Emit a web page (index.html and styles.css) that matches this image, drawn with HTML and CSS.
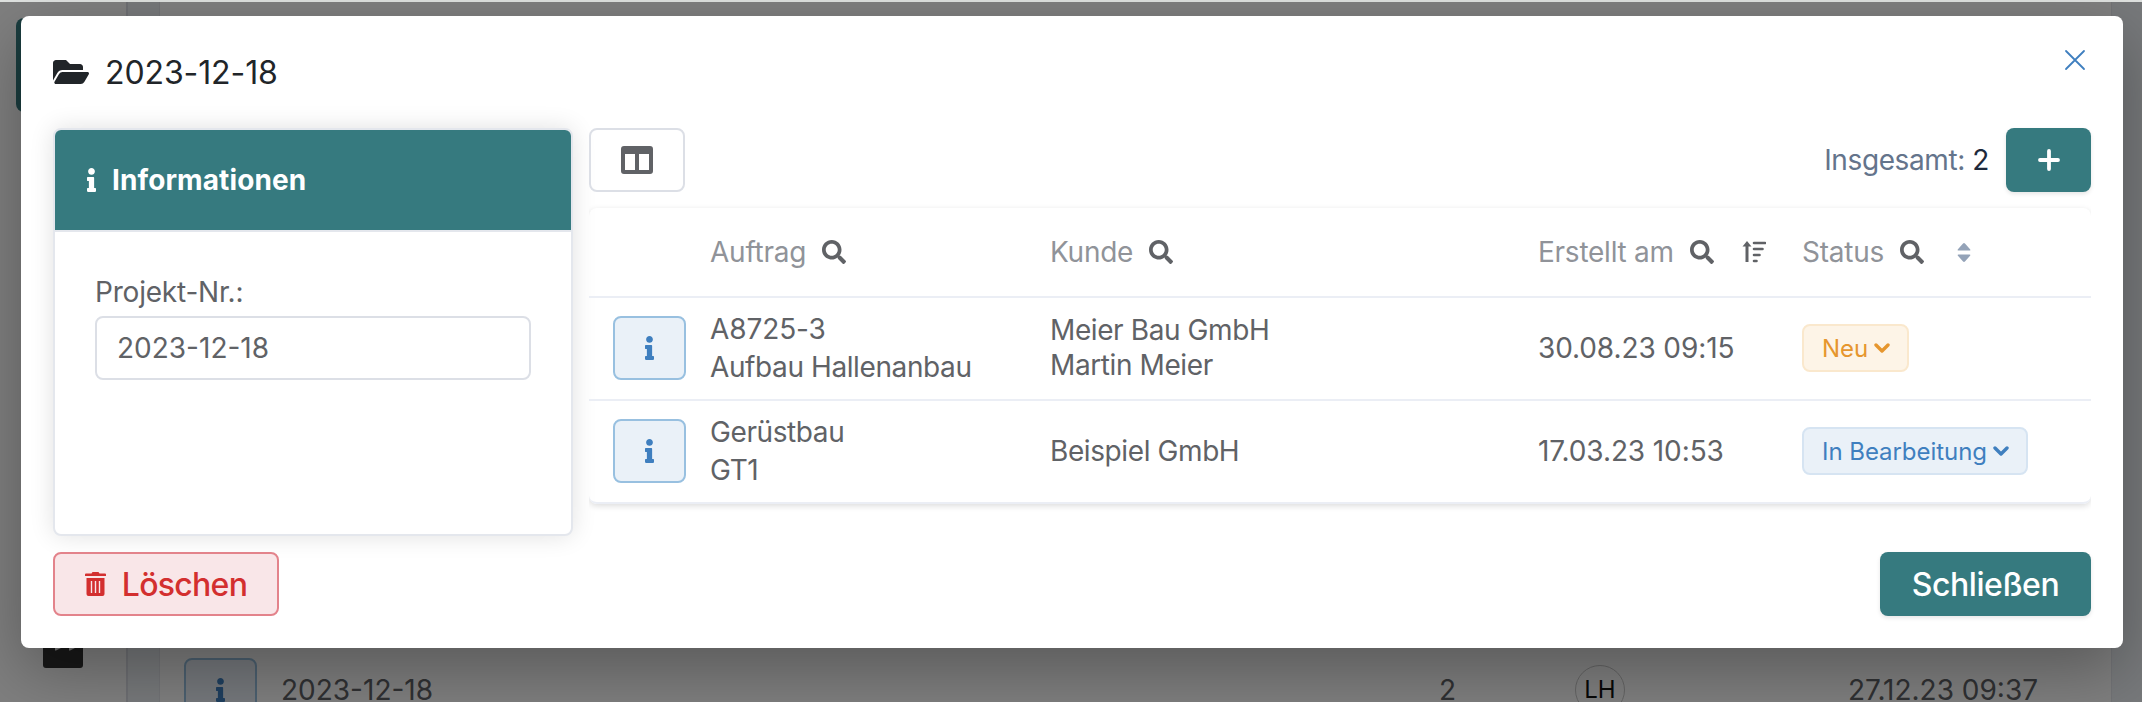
FILE: index.html
```
<!DOCTYPE html>
<html lang="de">
<head>
<meta charset="utf-8">
<title>Projekt 2023-12-18</title>
<link rel="stylesheet" href="styles.css">
</head>
<body>
<svg class="defs" width="0" height="0">
  <symbol id="info" viewBox="0 0 192 512"><path d="M20 424.229h20V279.771H20c-11.046 0-20-8.954-20-20V212c0-11.046 8.954-20 20-20h112c11.046 0 20 8.954 20 20v212.229h20c11.046 0 20 8.954 20 20V492c0 11.046-8.954 20-20 20H20c-11.046 0-20-8.954-20-20v-47.771c0-11.046 8.954-20 20-20zM96 0C56.235 0 24 32.235 24 72s32.235 72 72 72 72-32.235 72-72S135.764 0 96 0z"/></symbol>
  <symbol id="search" viewBox="0 0 512 512"><path d="M505 442.7L405.3 343c-4.500-4.500-10.600-7-17-7H372c27.600-35.300 44-79.700 44-128C416 93.100 322.900 0 208 0S0 93.100 0 208s93.100 208 208 208c48.300 0 92.700-16.400 128-44v16.300c0 6.400 2.500 12.500 7 17l99.700 99.700c9.400 9.400 24.600 9.400 33.900 0l28.300-28.300c9.400-9.400 9.400-24.600.1-34zM208 336c-70.700 0-128-57.200-128-128 0-70.700 57.200-128 128-128 70.700 0 128 57.200 128 128 0 70.700-57.200 128-128 128z"/></symbol>
  <symbol id="chevron" viewBox="0 0 16 12"><path d="M2 3l6 6 6-6" fill="none" stroke="currentColor" stroke-width="3.400" stroke-linecap="round" stroke-linejoin="round"/></symbol>
</svg>

<div class="app">
  <aside class="sidebar">
    <div class="nav-active"></div>
    <div class="nav-toggle"><svg viewBox="0 0 40 20"><path d="M12 0h6l-5 2.500h-1zM26 0h6l-5 2.500h-1z" fill="#e5e5e5"/></svg></div>
  </aside>
  <main class="content">
    <div class="panel">
      <div class="panel-row">
        <span class="btn-info"><svg class="i-info"><use href="#info"/></svg></span>
        <span class="p-name">2023-12-18</span>
        <span class="p-count">2</span>
        <span class="avatar">LH</span>
        <span class="p-date">27.12.23 09:37</span>
      </div>
    </div>
  </main>
</div>
<div class="backdrop"></div>

<div class="modal" role="dialog">
  <header class="modal-head">
    <svg class="i-folder" viewBox="0 64 576 384"><path d="M572.694 292.093L500.270 416.248A63.997 63.997 0 0 1 444.989 448H45.025c-18.523 0-30.064-20.093-20.731-36.093l72.424-124.155A64 64 0 0 1 152 256h399.964c18.523 0 30.064 20.093 20.730 36.093zM152 224h328v-48c0-26.510-21.490-48-48-48H272l-64-64H48C21.490 64 0 85.490 0 112v278.046l69.077-118.418C86.214 242.250 117.989 224 152 224z"/></svg>
    <h1>2023-12-18</h1>
    <button class="close" aria-label="Schließen"><svg viewBox="0 0 22 22"><path d="M2 2l18 18M20 2L2 20" stroke="currentColor" stroke-width="1.800" stroke-linecap="round"/></svg></button>
  </header>
  <div class="modal-body">
    <section class="card">
      <h2><svg class="i-info"><use href="#info"/></svg>Informationen</h2>
      <div class="card-body">
        <label>Projekt-Nr.:</label>
        <div class="input">2023-12-18</div>
      </div>
    </section>
    <section class="orders">
      <div class="toolbar">
        <button class="btn-cols" aria-label="Spalten"><svg viewBox="0 0 32 28"><path fill-rule="evenodd" d="M3 0h26a3 3 0 0 1 3 3v22a3 3 0 0 1-3 3H3a3 3 0 0 1-3-3V3a3 3 0 0 1 3-3zM4 8v16h10V8zM18 8v16h10V8z"/></svg></button>
        <div class="total">Insgesamt: <b>2</b></div>
        <button class="btn-add" aria-label="Neu"><svg viewBox="0 0 22 22"><path d="M11 2v18M2 11h18" stroke="currentColor" stroke-width="3.800" stroke-linecap="round"/></svg></button>
      </div>
      <div class="table">
        <div class="tr th">
          <div></div>
          <div>Auftrag<svg class="i-search"><use href="#search"/></svg></div>
          <div>Kunde<svg class="i-search"><use href="#search"/></svg></div>
          <div>Erstellt am<svg class="i-search"><use href="#search"/></svg><svg class="i-sort" viewBox="0 0 24 22"><path d="M5 4v17" fill="none" stroke="currentColor" stroke-width="3"/><path d="M5 0l4.500 5.500h-9z"/><path d="M12 2h11M12 8h8.500M12 14h5.500M12 20h2.500" fill="none" stroke="currentColor" stroke-width="2.600" stroke-linecap="round"/></svg></div>
          <div>Status<svg class="i-search"><use href="#search"/></svg><svg class="i-updown" viewBox="0 0 14 20"><path d="M7 0q.6 0 1 .5l5.400 6q.9 1.300-.6 1.500H1.200q-1.500-.2-.6-1.500L6 .5Q6.400 0 7 0zM7 20q.6 0 1-.5l5.400-6q.9-1.300-.6-1.500H1.200q-1.500.2-.6 1.500l5.400 6q.4.5 1 .5z"/></svg></div>
        </div>
        <div class="tr">
          <div><span class="btn-info"><svg class="i-info"><use href="#info"/></svg></span></div>
          <div class="stack"><span class="num">A8725-3</span><br>Aufbau Hallenanbau</div>
          <div class="tight">Meier Bau GmbH<br>Martin Meier</div>
          <div class="num">30.08.23 09:15</div>
          <div><span class="tag tag-new">Neu<svg class="i-chev"><use href="#chevron"/></svg></span></div>
        </div>
        <div class="tr">
          <div><span class="btn-info"><svg class="i-info"><use href="#info"/></svg></span></div>
          <div class="stack">Gerüstbau<br>GT1</div>
          <div>Beispiel GmbH</div>
          <div class="num">17.03.23 10:53</div>
          <div><span class="tag tag-work">In Bearbeitung<svg class="i-chev"><use href="#chevron"/></svg></span></div>
        </div>
      </div>
    </section>
  </div>
  <footer class="modal-foot">
    <button class="btn-delete"><svg viewBox="0 0 21 24"><path fill-rule="evenodd" d="M1 1.500h5.500L7.500 0h6l1 1.500H20a1 1 0 0 1 1 1V4H0V2.500a1 1 0 0 1 1-1zM1.500 6h18v16a2 2 0 0 1-2 2h-14a2 2 0 0 1-2-2zM5.800 9v12h1.400V9zM9.800 9v12h1.400V9zM13.800 9v12h1.400V9z"/></svg>Löschen</button>
    <button class="btn-close">Schließen</button>
  </footer>
</div>
</body>
</html>
```
FILE: styles.css
```
* { box-sizing: border-box; }
body {
  margin: 0;
  width: 2142px;
  height: 702px;
  overflow: hidden;
  position: relative;
  font-family: Inter, "Liberation Sans", sans-serif;
  font-size: 28px;
  color: #606266;
  background: #dfe2e0;
}
.defs { position: absolute; }
svg { display: block; flex: none; fill: currentColor; }
button { font: inherit; padding: 0; border: 0; background: none; }
h1, h2 { margin: 0; }

.app { display: flex; height: 700px; margin-top: 2px; }
.sidebar {
  width: 128px;
  background: #fff;
  border-right: 2px solid #dcdfe6;
  padding: 16px 0 0 16px;
  display: flex;
  flex-direction: column;
}
.nav-active { width: 96px; height: 94px; border-radius: 8px; background: #367a7f; }
.nav-toggle { margin: 516px 0 0 27px; width: 40px; height: 40px; padding-top: 20px; border-radius: 3px; background: #303030; }
.content { flex: 1; background: #eef2f7; padding: 0 30px 0 31px; }
.panel { background: #fff; height: 700px; padding-top: 656px; border-left: 1px solid #e4e7ed; border-right: 1px solid #e4e7ed; }
.panel-row { display: grid; grid-template-columns: 97px 1158px 136px 273px auto; align-items: center; height: 64px; padding-left: 24px; line-height: 22px; }
.avatar { width: 50px; height: 50px; border: 1px solid #c8c8c8; border-radius: 50%; color: #111; font-size: 24px; line-height: 18px; display: flex; align-items: center; justify-content: center; }
.backdrop { position: absolute; inset: 2px 0 0; background: rgba(0, 0, 0, .5); }

.modal {
  position: absolute;
  left: 21px;
  top: 16px;
  width: 2102px;
  height: 632px;
  padding: 0 32px;
  border-radius: 8px;
  background: #fff;
  box-shadow: 0 22px 64px rgba(0, 0, 0, .3);
}
.modal-head { display: flex; align-items: center; height: 112px; color: #212529; }
.i-folder { width: 36px; height: 24px; }
h1 { margin-left: 16px; font-size: 32px; font-weight: 400; letter-spacing: -.1px; }
.close { margin: -25px 5px 0 auto; color: #3f7fbf; }
.close svg { width: 22px; height: 22px; }

.modal-body { display: flex; gap: 16px; height: 408px; }
.card {
  width: 520px;
  border: 2px solid #e4e7ed;
  border-radius: 8px;
  background: #fff;
  box-shadow: 0 0 24px rgba(0, 0, 0, .12);
}
h2 {
  display: flex;
  align-items: center;
  gap: 16px;
  height: 102px;
  padding-left: 32px;
  border-bottom: 2px solid #e4e7ed;
  border-radius: 6px 6px 0 0;
  background: #367a7f;
  background-clip: padding-box;
  color: #fff;
  font-size: 28px;
  font-weight: 700;
  letter-spacing: .1px;
}
.i-info { width: 9px; height: 24px; }
.card-body { padding: 40px; }
label { display: block; height: 44px; line-height: 41px; letter-spacing: -.2px; }
.input { height: 64px; padding: 0 20px; line-height: 60px; border: 2px solid #dcdfe6; border-radius: 8px; }

.orders { width: 1502px; }
.toolbar { display: flex; align-items: center; height: 64px; }
.btn-cols { display: flex; align-items: center; justify-content: center; width: 96px; height: 64px; border: 2px solid #dcdfe6; border-radius: 8px; color: #606266; }
.btn-cols svg { width: 32px; height: 28px; }
.total { margin-left: auto; color: #64748b; letter-spacing: -.4px; }
.total b { font-weight: 400; color: #1e293b; }
.btn-add { display: flex; align-items: center; justify-content: center; width: 85px; height: 64px; margin-left: 17px; border-radius: 8px; background: #367a7f; color: #fff; box-shadow: 0 2px 4px rgba(0, 0, 0, .1); }
.btn-add svg { width: 22px; height: 22px; }

.table { margin-top: 16px; border-radius: 8px; box-shadow: 0 2px 6px rgba(0, 0, 0, .14); clip-path: inset(-4px 0 -12px 0); }
.tr { display: grid; grid-template-columns: 97px 340px 488px 264px auto; align-items: center; height: 103px; padding: 0 0 1px 24px; border-bottom: 2px solid #ebeef5; letter-spacing: -.4px; }
.tr > div { white-space: nowrap; }
.tr:last-child { border-radius: 0 0 8px 8px; }
.th { height: 90px; padding-bottom: 0; color: #909399; letter-spacing: -.25px; }
.th > div { display: flex; align-items: center; }
.tr .num { letter-spacing: -.1px; }
.i-search { width: 24px; height: 24px; margin-left: 16px; color: #606266; }
.i-sort { width: 24px; height: 22px; margin-left: 28px; color: #606266; }
.i-updown { width: 14px; height: 19px; margin-left: 33px; color: #94a3b8; }
.stack { line-height: 38px; }
.tight { line-height: 35px; }
.btn-info { display: flex; align-items: center; justify-content: center; width: 73px; height: 64px; border: 2px solid #98c0e0; border-radius: 8px; background: #eaf1f8; color: #3f7fbf; }

.tag { display: flex; align-items: center; width: max-content; height: 48px; padding: 0 17px 0 18px; border: 2px solid; border-radius: 8px; font-size: 24px; letter-spacing: -.05px; }
.tag-new { color: #e6962e; background: #fdf4e7; border-color: #fae8cd; }
.tag-work { color: #3f7fbf; background: #eaf1f8; border-color: #d6e4f2; }
.i-chev { width: 16px; height: 12px; margin-left: 6px; }

.modal-foot { display: flex; justify-content: space-between; margin-top: 16px; }
.modal-foot button { display: flex; align-items: center; justify-content: center; height: 64px; border-radius: 8px; font-size: 32px; font-weight: 500; }
.btn-delete { width: 226px; gap: 16px; border: 2px solid #e3838b; background: #f9e6e8; color: #d32f2f; letter-spacing: -.7px; }
.btn-delete svg { width: 21px; height: 24px; }
.btn-close { width: 211px; background: #367a7f; color: #fff; letter-spacing: -.45px; box-shadow: 0 2px 4px rgba(0, 0, 0, .1); }
```
